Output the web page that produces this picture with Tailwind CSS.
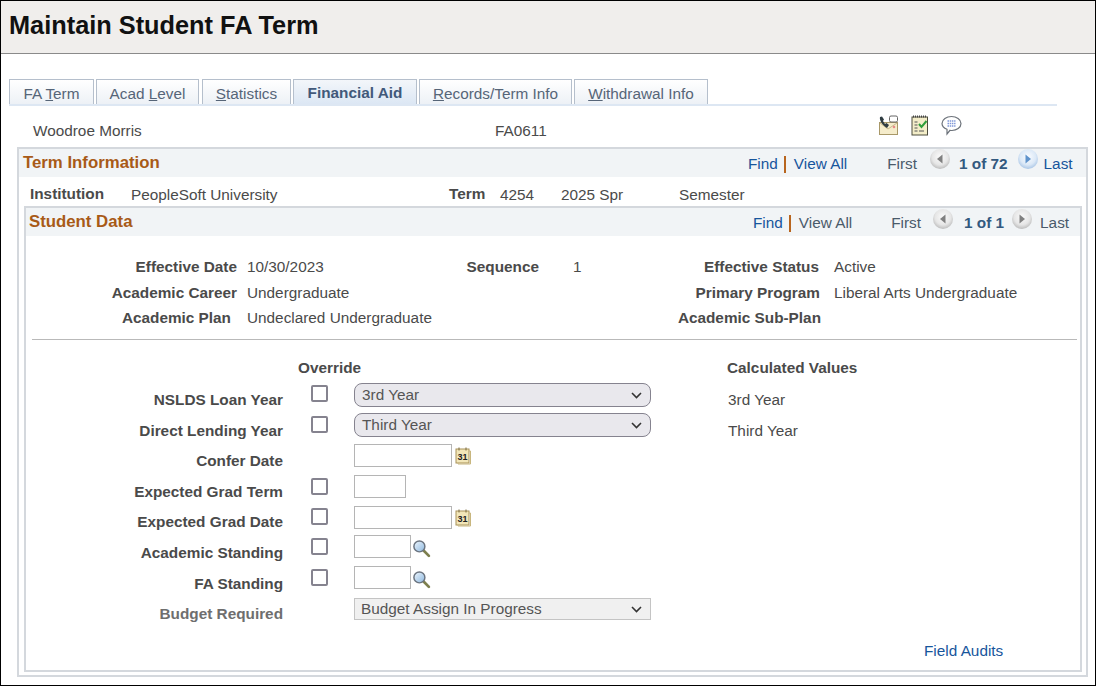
<!DOCTYPE html>
<html lang="en">
<head>
<meta charset="UTF-8">
<script src="https://cdn.jsdelivr.net/npm/@tailwindcss/browser@4"></script>
<title>Maintain Student FA Term</title>
</head>
<body class="bg-white">
<svg width="0" height="0" class="absolute">
  <defs>
    <radialGradient id="gray" cx="50%" cy="40%" r="60%"><stop offset="0" stop-color="#fbfbfb"/><stop offset="0.65" stop-color="#e6e6e6"/><stop offset="1" stop-color="#bdbdbd"/></radialGradient>
    <radialGradient id="blue" cx="50%" cy="40%" r="60%"><stop offset="0" stop-color="#fafcff"/><stop offset="0.65" stop-color="#dce9f7"/><stop offset="1" stop-color="#aac6e6"/></radialGradient>
    <linearGradient id="lens" x1="0" y1="0" x2="1" y2="1"><stop offset="0" stop-color="#eef6fd"/><stop offset="1" stop-color="#8db8e0"/></linearGradient>
  </defs>
</svg>
<div class="w-[1096px] h-[686px] border border-black font-['Liberation_Sans',Arial,sans-serif] text-[15.33px] text-[#4a4a4a] overflow-hidden">
  <div class="h-[53px] bg-[#f0eeec] border-b border-[#8a8a8a] pl-2 pt-[9px]">
    <h1 class="text-[25.33px] leading-[30px] font-bold text-[#111]">Maintain Student FA Term</h1>
  </div>

  <div class="ml-2 mt-[25px] w-[1048px] h-[27px] flex border-b-2 border-[#dde7f3] text-[#566578] whitespace-nowrap">
    <div class="w-[85px] h-[25px] border border-b-0 border-[#b5bfcc] bg-gradient-to-b from-white to-[#edf1f6] text-center leading-[28px]">FA <u>T</u>erm</div>
    <div class="ml-[2px] w-[103px] h-[25px] border border-b-0 border-[#b5bfcc] bg-gradient-to-b from-white to-[#edf1f6] text-center leading-[28px]">Acad <u>L</u>evel</div>
    <div class="ml-[3px] w-[89px] h-[25px] border border-b-0 border-[#b5bfcc] bg-gradient-to-b from-white to-[#edf1f6] text-center leading-[28px]"><u>S</u>tatistics</div>
    <div class="ml-[2px] w-[124px] h-[25px] border border-b-0 border-[#b5bfcc] bg-gradient-to-b from-[#f3f6fa] to-[#dce7f4] text-center leading-[26px] font-bold text-[#41597a]">Financial Aid</div>
    <div class="ml-[2px] w-[153px] h-[25px] border border-b-0 border-[#b5bfcc] bg-gradient-to-b from-white to-[#edf1f6] text-center leading-[28px]"><u>R</u>ecords/Term Info</div>
    <div class="ml-[2px] w-[134px] h-[25px] border border-b-0 border-[#b5bfcc] bg-gradient-to-b from-white to-[#edf1f6] text-center leading-[28px]"><u>W</u>ithdrawal Info</div>
  </div>

  <div class="h-[41px] flex relative">
    <span class="ml-8 w-[462px] pt-[15px] leading-5">Woodroe Morris</span>
    <span class="pt-[15px] leading-5">FA0611</span>
    <div class="ml-[331px] pt-[9px] flex gap-[12px]">
      <svg width="21" height="21" viewBox="0 0 21 21"><rect x="1.500" y="7.500" width="18" height="12" fill="#f5eccb" stroke="#a89868"/><path d="M2 8l8 6 9-6" fill="none" stroke="#c8b98a"/><circle cx="16" cy="12" r="1.300" fill="#e88a8a"/><path d="M2 2c-1 3 3 9 7 11l2-3-2.500-2-1.500 1-2-3 1-1.500-2-3z" fill="#2f3c42"/><rect x="11.500" y="1" width="8" height="6" rx="1.500" fill="#fff" stroke="#666"/></svg>
      <svg width="18" height="21" viewBox="0 0 18 21"><rect x="1" y="2" width="15.500" height="18" fill="#f3edc8" stroke="#4c4c3c"/><path d="M2 1.500h14" stroke="#444" stroke-dasharray="1 1" stroke-width="2"/><path d="M3.500 7h3M3.500 10h3M3.500 13h3M3.500 16h3M8 16h5" stroke="#555" stroke-width="1.200"/><path d="M8 9l2.500 3 5-6" fill="none" stroke="#2f9e3a" stroke-width="2"/></svg>
      <svg width="21" height="21" viewBox="0 0 21 21"><path d="M10.500 1.500c5 0 9.500 2.800 9.500 7s-4.500 7-9 7c-.7 0-1.300 0-2-.2l-3 3.700v-4.700c-3-1.200-5-3.200-5-5.800 0-4.200 4.500-7 9.500-7z" fill="#fff" stroke="#6d737b" stroke-width="1.200"/><path d="M6.500 6h8M6.500 8.500h8M6.500 11h8" stroke="#7f97d8" stroke-width="1.400" stroke-dasharray="1.500 .7"/></svg>
    </div>
  </div>

  <div class="ml-4 w-[1071px] h-[530px] border-2 border-[#d4d8dd]">
    <div class="h-[28px] bg-[#f1f4f6] flex items-center relative">
      <span class="ml-1 text-[16.8px] font-bold text-[#a85a17]">Term Information</span>
      <div class="absolute left-[729px] top-0 h-full pt-[3px] flex items-center text-[#17559c] whitespace-nowrap">
        <span>Find</span><span class="ml-[6px] mr-[8px] w-[2px] h-[17px] bg-[#b8651e]"></span><span>View All</span>
        <span class="ml-[40px] text-[#4a5a6a]">First</span>
        <svg class="ml-[13px] -mt-[11px]" width="20" height="20" viewBox="0 0 20 20"><circle cx="10" cy="10" r="10" fill="url(#gray)"/><path d="M12.500 5.500v9l-5.500-4.500z" fill="#808080"/></svg>
        <span class="ml-[9px] font-bold text-[#33597f]">1 of 72</span>
        <svg class="ml-[10px] -mt-[11px]" width="20" height="20" viewBox="0 0 20 20"><circle cx="10" cy="10" r="10" fill="url(#blue)"/><path d="M7.500 5.500v9l5.500-4.500z" fill="#5f93cc"/></svg>
        <span class="ml-[6px]">Last</span>
      </div>
    </div>
    <div class="h-[29px] pt-[5px] flex items-center">
      <span class="ml-[11px] w-[101px] font-bold">Institution</span>
      <span class="w-[318px] pt-[2px]">PeopleSoft University</span>
      <span class="w-[51px] font-bold">Term</span>
      <span class="w-[61px] pt-[2px]">4254</span>
      <span class="w-[118px] pt-[2px]">2025 Spr</span>
      <span class="pt-[2px]">Semester</span>
    </div>

    <div class="ml-[5px] w-[1058px] h-[466px] border-2 border-[#d4d8dd]">
      <div class="h-[28px] bg-[#f1f4f6] flex items-center relative">
        <span class="ml-[3px] text-[16.8px] font-bold text-[#a85a17]">Student Data</span>
        <div class="absolute left-[727px] top-0 h-full pt-[3px] flex items-center text-[#4a5a6a] whitespace-nowrap">
          <span class="text-[#17559c]">Find</span><span class="ml-[6px] mr-[8px] w-[2px] h-[17px] bg-[#b8651e]"></span><span>View All</span>
          <span class="ml-[39px]">First</span>
          <svg class="ml-[12px] -mt-[9px]" width="20" height="20" viewBox="0 0 20 20"><circle cx="10" cy="10" r="10" fill="url(#gray)"/><path d="M12.500 5.500v9l-5.500-4.500z" fill="#808080"/></svg>
          <span class="ml-[11px] font-bold text-[#33597f]">1 of 1</span>
          <svg class="ml-[8px] -mt-[9px]" width="20" height="20" viewBox="0 0 20 20"><circle cx="10" cy="10" r="10" fill="url(#gray)"/><path d="M7.500 5.500v9l5.500-4.500z" fill="#808080"/></svg>
          <span class="ml-[8px]">Last</span>
        </div>
      </div>

      <div class="mt-[19px] grid grid-cols-[211px_203px_99px_101px_179px_1fr] auto-rows-[25.500px] items-center whitespace-nowrap">
        <b class="text-right">Effective Date</b><span class="pl-[10px]">10/30/2023</span><b class="text-right">Sequence</b><span class="pl-[34px]">1</span><b class="text-right">Effective Status</b><span class="pl-[15px]">Active</span>
        <b class="text-right">Academic Career</b><span class="pl-[10px]">Undergraduate</span><span></span><span></span><b class="text-right -mr-[1px]">Primary Program</b><span class="pl-[15px]">Liberal Arts Undergraduate</span>
        <b class="text-right pr-[6px]">Academic Plan</b><span class="pl-[10px]">Undeclared Undergraduate</span><span></span><span></span><b class="text-right -mr-[2px]">Academic Sub-Plan</b><span></span>
      </div>

      <div class="ml-[6px] mt-[7px] w-[1045px] border-t border-[#b9b9b9]"></div>

      <div class="mt-[19px] h-[18px] flex font-bold leading-[18px]">
        <span class="ml-[272px] w-[429px]">Override</span>
        <span>Calculated Values</span>
      </div>

      <div class="h-[31px] flex">
        <b class="w-[257px] text-right pt-[13px] leading-5">NSLDS Loan Year</b>
        <span class="ml-[28px] mt-[8px] w-[17px] h-[17px] rounded-[2px] border-2 border-[#85838f]"></span>
        <div class="ml-[26px] mt-[6px] w-[297px] h-[24px] pl-[7px] pr-2 pt-[1px] rounded-lg border border-[#85838f] bg-[#e9e8ed] flex items-center justify-between text-[#555]">3rd Year
          <svg width="11" height="7" viewBox="0 0 11 7"><path d="M1 1l4.500 4.500L10 1" fill="none" stroke="#333" stroke-width="1.600"/></svg>
        </div>
        <span class="ml-[77px] pt-[13px] leading-5">3rd Year</span>
      </div>
      <div class="h-[31px] flex">
        <b class="w-[257px] text-right pt-[13px] leading-5">Direct Lending Year</b>
        <span class="ml-[28px] mt-[8px] w-[17px] h-[17px] rounded-[2px] border-2 border-[#85838f]"></span>
        <div class="ml-[26px] mt-[5px] w-[297px] h-[24px] pl-[7px] pr-2 pt-[1px] rounded-lg border border-[#85838f] bg-[#e9e8ed] flex items-center justify-between text-[#555]">Third Year
          <svg width="11" height="7" viewBox="0 0 11 7"><path d="M1 1l4.500 4.500L10 1" fill="none" stroke="#333" stroke-width="1.600"/></svg>
        </div>
        <span class="ml-[77px] pt-[13px] leading-5">Third Year</span>
      </div>
      <div class="h-[30px] flex">
        <b class="w-[257px] text-right pt-[12px] leading-5">Confer Date</b>
        <span class="ml-[71px] mt-[5px] w-[98px] h-[23px] border border-[#b5b5b5]"></span>
        <svg class="ml-[3px] mt-[8px]" width="16" height="18" viewBox="0 0 16 18"><rect x="1" y="2" width="13" height="14" fill="#f2e6b8" stroke="#a8925a"/><path d="M14 4h1.500v13H3v-1" fill="none" stroke="#c8b67e"/><path d="M4 .5v3M11 .5v3" stroke="#7a6a3c"/><text x="7.500" y="13" text-anchor="middle" font-size="9" font-weight="700" fill="#222" font-family="Liberation Sans">31</text></svg>
      </div>
      <div class="h-[31px] flex">
        <b class="w-[257px] text-right pt-[13px] leading-5">Expected Grad Term</b>
        <span class="ml-[28px] mt-[9px] w-[17px] h-[17px] rounded-[2px] border-2 border-[#85838f]"></span>
        <span class="ml-[26px] mt-[6px] w-[52px] h-[23px] border border-[#b5b5b5]"></span>
      </div>
      <div class="h-[30px] flex">
        <b class="w-[257px] text-right pt-[12px] leading-5">Expected Grad Date</b>
        <span class="ml-[28px] mt-[8px] w-[17px] h-[17px] rounded-[2px] border-2 border-[#85838f]"></span>
        <span class="ml-[26px] mt-[6px] w-[98px] h-[23px] border border-[#b5b5b5]"></span>
        <svg class="ml-[3px] mt-[9px]" width="16" height="18" viewBox="0 0 16 18"><rect x="1" y="2" width="13" height="14" fill="#f2e6b8" stroke="#a8925a"/><path d="M14 4h1.500v13H3v-1" fill="none" stroke="#c8b67e"/><path d="M4 .5v3M11 .5v3" stroke="#7a6a3c"/><text x="7.500" y="13" text-anchor="middle" font-size="9" font-weight="700" fill="#222" font-family="Liberation Sans">31</text></svg>
      </div>
      <div class="h-[31px] flex">
        <b class="w-[257px] text-right pt-[13px] leading-5">Academic Standing</b>
        <span class="ml-[28px] mt-[8px] w-[17px] h-[17px] rounded-[2px] border-2 border-[#85838f]"></span>
        <span class="ml-[26px] mt-[5px] w-[57px] h-[23px] border border-[#b5b5b5]"></span>
        <svg class="ml-[1px] mt-[9px]" width="19" height="19" viewBox="0 0 18 18"><path d="M10.500 10.500L16 16" stroke="#7d7f4e" stroke-width="2.600" stroke-linecap="round"/><circle cx="7" cy="7" r="5.200" fill="url(#lens)" stroke="#6b7480" stroke-width="1.400"/></svg>
      </div>
      <div class="h-[30px] flex">
        <b class="w-[257px] text-right pt-[13px] leading-5">FA Standing</b>
        <span class="ml-[28px] mt-[8px] w-[17px] h-[17px] rounded-[2px] border-2 border-[#85838f]"></span>
        <span class="ml-[26px] mt-[5px] w-[57px] h-[23px] border border-[#b5b5b5]"></span>
        <svg class="ml-[1px] mt-[9px]" width="19" height="19" viewBox="0 0 18 18"><path d="M10.500 10.500L16 16" stroke="#7d7f4e" stroke-width="2.600" stroke-linecap="round"/><circle cx="7" cy="7" r="5.200" fill="url(#lens)" stroke="#6b7480" stroke-width="1.400"/></svg>
      </div>
      <div class="h-[31px] flex">
        <b class="w-[257px] text-right pt-[13px] leading-5 text-[#6e6e6e]">Budget Required</b>
        <div class="ml-[71px] mt-[7px] w-[297px] h-[22px] pl-[6px] pr-2 pt-[1px] border border-[#c4c4c4] bg-[#f0f0f0] flex items-center justify-between text-[#555]">Budget Assign In Progress
          <svg width="11" height="7" viewBox="0 0 11 7"><path d="M1 1l4.500 4.500L10 1" fill="none" stroke="#333" stroke-width="1.600"/></svg>
        </div>
      </div>
      <div class="mt-[19px] ml-[898px] text-[#17559c] leading-5">Field Audits</div>
    </div>
  </div>
</div>
</body>
</html>
